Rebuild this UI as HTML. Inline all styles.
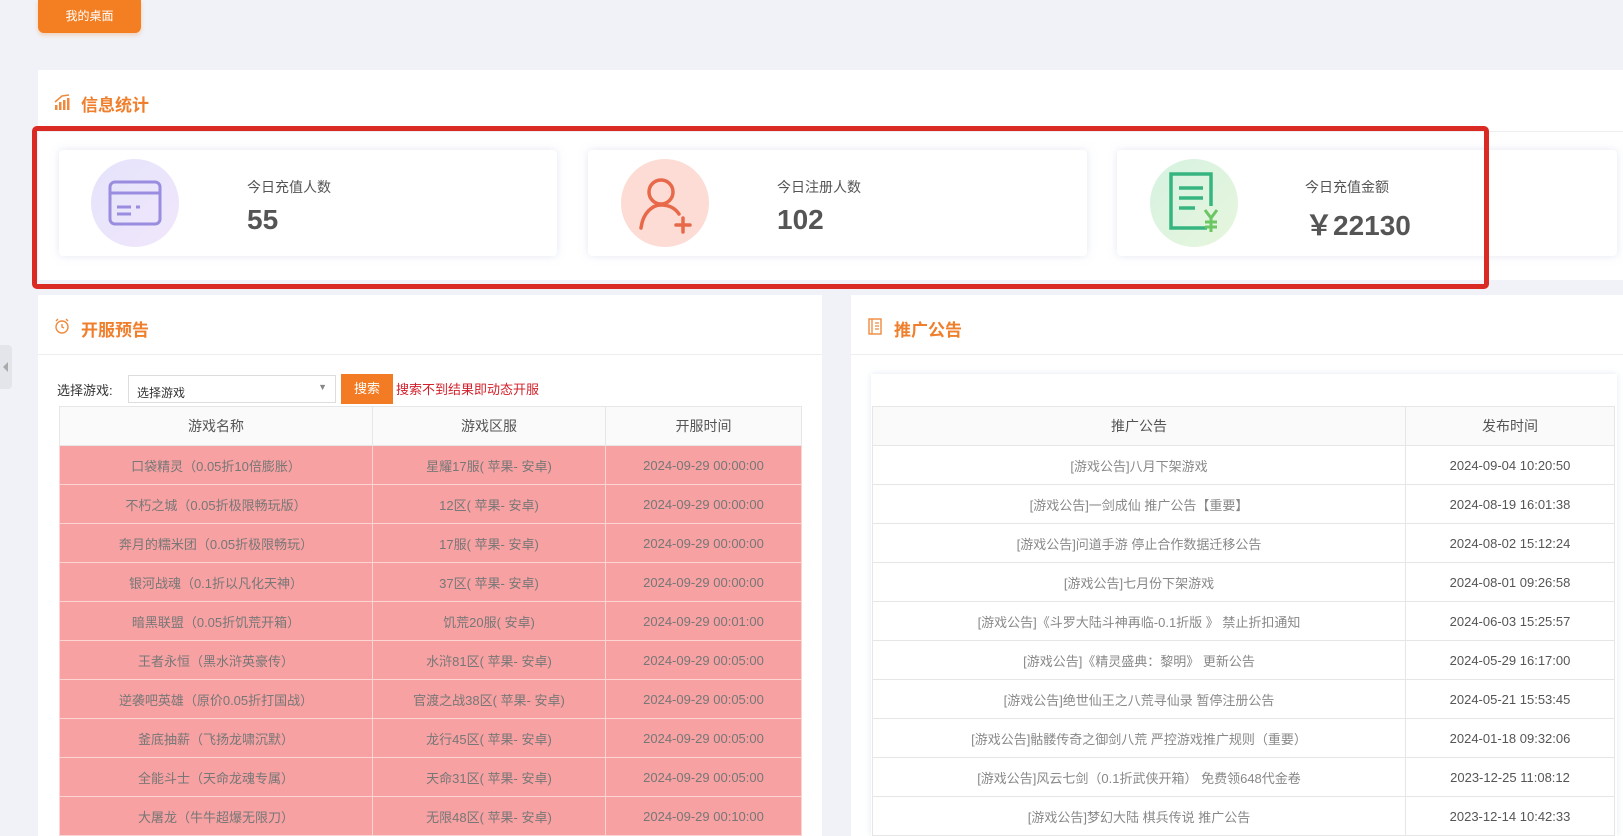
<!DOCTYPE html>
<html><head><meta charset="utf-8"><style>
*{margin:0;padding:0;box-sizing:border-box}
body{width:1623px;height:836px;overflow:hidden;background:#f0f2f7;font-family:"Liberation Sans","Noto Sans CJK SC",sans-serif;position:relative;color:#666}
.abs{position:absolute}
.btn{left:38px;top:0;width:103px;height:33px;background:#f47f22;border-radius:0 0 6px 6px;color:#fff;font-size:12px;text-align:center;line-height:33px;box-shadow:0 2px 4px rgba(244,127,34,.3)}
.panel{background:#fff}
.title{font-size:17px;font-weight:bold;color:#ef7f2c}
.card{background:#fff;top:150px;height:106px;box-shadow:0 0 8px rgba(200,210,230,.5);border-radius:4px}
.circ{width:88px;height:88px;border-radius:50%;top:9px;left:32px}
.lab{font-size:14px;color:#555;top:27px}
.val{font-size:28px;font-weight:bold;color:#555;top:54px}
table{border-collapse:collapse;position:absolute;font-size:13px}
td,th{text-align:center;height:39px;border:1px solid #e6e6e6}
th{font-weight:normal;font-size:14px;color:#555;background:#fafafa}
.lt td{background:#f7a1a2;border-color:#fbd4d4;color:#777}
.rt td{color:#888;background:#fff}
</style></head><body>
<div class="abs btn">我的桌面</div>
<div class="abs" style="left:0;top:345px;width:12px;height:44px;background:#e3e5ea;border-radius:0 4px 4px 0"></div>
<div class="abs" style="left:3px;top:362px;width:0;height:0;border-right:5px solid #aaa;border-top:5px solid transparent;border-bottom:5px solid transparent"></div>

<div class="abs panel" style="left:38px;top:70px;width:1585px;height:210px"></div>
<div class="abs" style="left:38px;top:131px;width:1585px;height:1px;background:#eee"></div>
<svg class="abs" style="left:54px;top:93px" width="18" height="18" viewBox="0 0 18 18"><g fill="#ef8a3c"><rect x="1" y="12" width="2.5" height="5"/><rect x="5" y="9" width="2.5" height="8"/><rect x="9" y="7" width="2.5" height="10"/><rect x="13" y="5" width="2.5" height="12"/></g><path d="M1 9 L8 3 L15 2" stroke="#ef8a3c" stroke-width="1.5" fill="none"/></svg>
<div class="abs title" style="left:81px;top:91px">信息统计</div>

<div class="abs card" style="left:59px;width:498px">
<div class="abs circ" style="background:linear-gradient(135deg,#e4e4fb,#f1e6fb)"></div>
<svg class="abs" style="left:48px;top:29px" width="56" height="48" viewBox="0 0 56 48"><rect x="3" y="3" width="50" height="42" rx="5" fill="none" stroke="#9a8de0" stroke-width="3"/><line x1="3" y1="14" x2="53" y2="14" stroke="#9a8de0" stroke-width="3"/><line x1="10" y1="28" x2="24" y2="28" stroke="#9a8de0" stroke-width="3"/><line x1="29" y1="28" x2="33" y2="28" stroke="#9a8de0" stroke-width="3"/><line x1="10" y1="35" x2="24" y2="35" stroke="#9a8de0" stroke-width="3"/></svg>
<div class="abs lab" style="left:188px">今日充值人数</div>
<div class="abs val" style="left:188px">55</div></div>

<div class="abs card" style="left:588px;width:499px">
<div class="abs circ" style="left:33px;background:#fcdcd5"></div>
<svg class="abs" style="left:45px;top:22px" width="64" height="64" viewBox="0 0 64 64"><circle cx="28" cy="20" r="12" fill="none" stroke="#e8694a" stroke-width="3.5"/><path d="M8 56 C10 40 20 33 28 33 C36 33 42 36 46 42" fill="none" stroke="#e8694a" stroke-width="3.5" stroke-linecap="round"/><path d="M50 46 V60 M43 53 H57" stroke="#e8694a" stroke-width="3.5" stroke-linecap="round"/></svg>
<div class="abs lab" style="left:189px">今日注册人数</div>
<div class="abs val" style="left:189px">102</div></div>

<div class="abs card" style="left:1117px;width:500px">
<div class="abs circ" style="left:33px;background:linear-gradient(135deg,#d6f2e2,#e7f6dc)"></div>
<svg class="abs" style="left:50px;top:20px" width="56" height="66" viewBox="0 0 56 66"><path d="M40 58 H4 V4 H44 V36" fill="none" stroke="#36b581" stroke-width="3.5"/><path d="M12 18 H36 M12 28 H36 M12 38 H28" stroke="#36b581" stroke-width="3.5"/><path d="M38 40 L44 48 L50 40 M44 48 V62 M38 52 H50 M38 57 H50" fill="none" stroke="#6cc664" stroke-width="3"/></svg>
<div class="abs lab" style="left:188px">今日充值金额</div>
<div class="abs val" style="left:188px">￥22130</div></div>

<div class="abs" style="left:32px;top:126px;width:1457px;height:163px;border:5px solid #da2a24;border-radius:5px"></div>

<div class="abs panel" style="left:38px;top:295px;width:784px;height:541px"></div>
<div class="abs" style="left:38px;top:354px;width:784px;height:1px;background:#eee"></div>
<svg class="abs" style="left:54px;top:318px" width="16" height="16" viewBox="0 0 16 16"><circle cx="8" cy="9" r="6" fill="none" stroke="#ef8a3c" stroke-width="1.4"/><path d="M8 6 V9 L10 10 M2 3 L4 1 M14 3 L12 1" stroke="#ef8a3c" stroke-width="1.4" fill="none"/></svg>
<div class="abs title" style="left:81px;top:316px">开服预告</div>
<div class="abs" style="left:57px;top:380px;font-size:13px;color:#333">选择游戏:</div>
<div class="abs" style="left:128px;top:375px;width:208px;height:28px;border:1px solid #ddd;background:#fff;font-size:12px;color:#333;padding:8px 0 0 8px">选择游戏<span style="position:absolute;right:8px;top:6px;font-size:9px;color:#888">▼</span></div>
<div class="abs" style="left:341px;top:374px;width:52px;height:30px;background:#f27b23;color:#fff;font-size:13px;text-align:center;line-height:30px">搜索</div>
<div class="abs" style="left:396px;top:379px;font-size:13px;color:#d2202a">搜索不到结果即动态开服</div>
<table class="lt" style="left:59px;top:406px;width:743px">
<tr><th style="width:313px">游戏名称</th><th style="width:233px">游戏区服</th><th>开服时间</th></tr>
<tr><td>口袋精灵（0.05折10倍膨胀）</td><td>星耀17服( 苹果- 安卓)</td><td>2024-09-29 00:00:00</td></tr>
<tr><td>不朽之城（0.05折极限畅玩版）</td><td>12区( 苹果- 安卓)</td><td>2024-09-29 00:00:00</td></tr>
<tr><td>奔月的糯米团（0.05折极限畅玩）</td><td>17服( 苹果- 安卓)</td><td>2024-09-29 00:00:00</td></tr>
<tr><td>银河战魂（0.1折以凡化天神）</td><td>37区( 苹果- 安卓)</td><td>2024-09-29 00:00:00</td></tr>
<tr><td>暗黑联盟（0.05折饥荒开箱）</td><td>饥荒20服( 安卓)</td><td>2024-09-29 00:01:00</td></tr>
<tr><td>王者永恒（黑水浒英豪传）</td><td>水浒81区( 苹果- 安卓)</td><td>2024-09-29 00:05:00</td></tr>
<tr><td>逆袭吧英雄（原价0.05折打国战）</td><td>官渡之战38区( 苹果- 安卓)</td><td>2024-09-29 00:05:00</td></tr>
<tr><td>釜底抽薪（飞扬龙啸沉默）</td><td>龙行45区( 苹果- 安卓)</td><td>2024-09-29 00:05:00</td></tr>
<tr><td>全能斗士（天命龙魂专属）</td><td>天命31区( 苹果- 安卓)</td><td>2024-09-29 00:05:00</td></tr>
<tr><td>大屠龙（牛牛超爆无限刀）</td><td>无限48区( 苹果- 安卓)</td><td>2024-09-29 00:10:00</td></tr>
</table>

<div class="abs panel" style="left:851px;top:295px;width:772px;height:541px"></div>
<div class="abs" style="left:851px;top:354px;width:772px;height:1px;background:#eee"></div>
<svg class="abs" style="left:867px;top:318px" width="16" height="17" viewBox="0 0 16 17"><rect x="2" y="1" width="12" height="15" fill="none" stroke="#ef8a3c" stroke-width="1.4"/><path d="M5 1 V16 M8 5 H12 M8 8 H12 M8 11 H12" stroke="#ef8a3c" stroke-width="1.3"/></svg>
<div class="abs title" style="left:894px;top:316px">推广公告</div>
<div class="abs" style="left:871px;top:374px;width:746px;height:462px;box-shadow:0 0 6px rgba(210,218,235,.6)"></div>
<table class="rt" style="left:872px;top:406px;width:743px">
<tr><th style="width:533px">推广公告</th><th>发布时间</th></tr>
<tr><td>[游戏公告]八月下架游戏</td><td style="color:#555">2024-09-04 10:20:50</td></tr>
<tr><td>[游戏公告]一剑成仙 推广公告【重要】</td><td style="color:#555">2024-08-19 16:01:38</td></tr>
<tr><td>[游戏公告]问道手游 停止合作数据迁移公告</td><td style="color:#555">2024-08-02 15:12:24</td></tr>
<tr><td>[游戏公告]七月份下架游戏</td><td style="color:#555">2024-08-01 09:26:58</td></tr>
<tr><td>[游戏公告]《斗罗大陆斗神再临-0.1折版 》 禁止折扣通知</td><td style="color:#555">2024-06-03 15:25:57</td></tr>
<tr><td>[游戏公告]《精灵盛典：黎明》 更新公告</td><td style="color:#555">2024-05-29 16:17:00</td></tr>
<tr><td>[游戏公告]绝世仙王之八荒寻仙录 暂停注册公告</td><td style="color:#555">2024-05-21 15:53:45</td></tr>
<tr><td>[游戏公告]骷髅传奇之御剑八荒 严控游戏推广规则（重要）</td><td style="color:#555">2024-01-18 09:32:06</td></tr>
<tr><td>[游戏公告]风云七剑（0.1折武侠开箱） 免费领648代金卷</td><td style="color:#555">2023-12-25 11:08:12</td></tr>
<tr><td>[游戏公告]梦幻大陆 棋兵传说 推广公告</td><td style="color:#555">2023-12-14 10:42:33</td></tr>
</table>
</body></html>
